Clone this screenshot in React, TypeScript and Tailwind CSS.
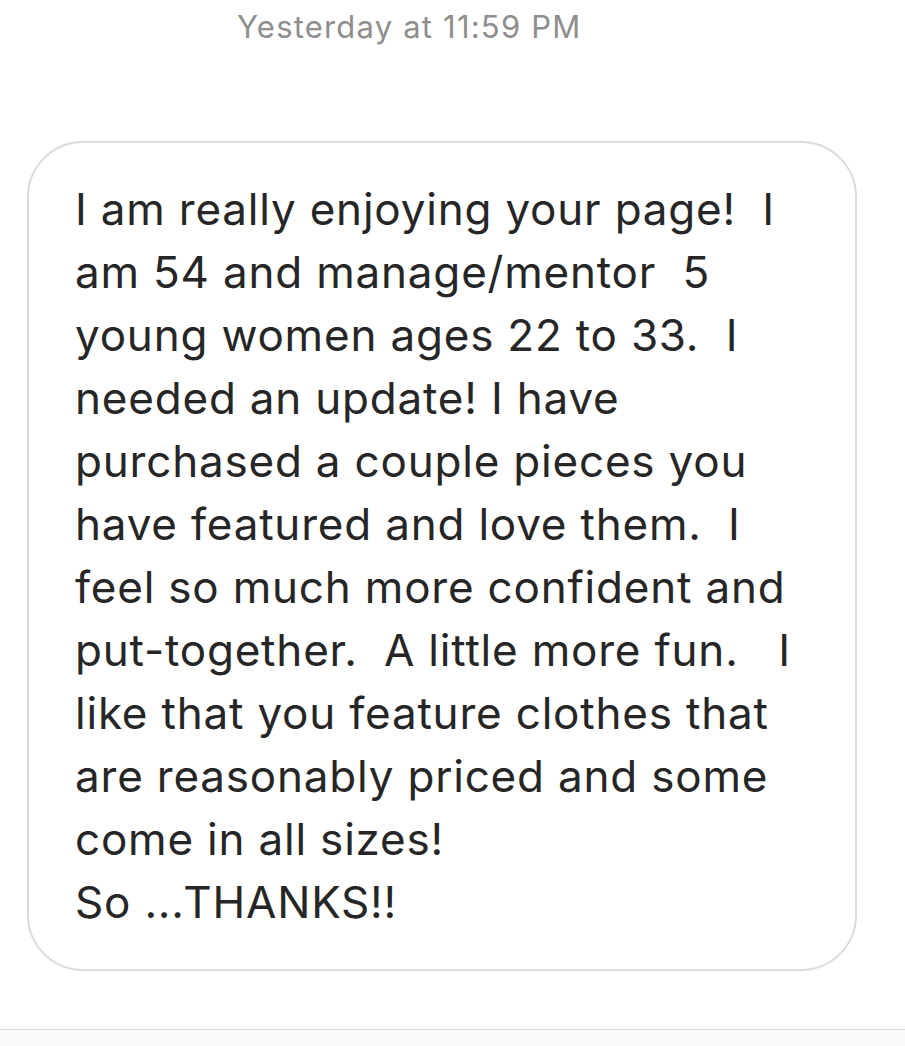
const lines = [
  "I am really enjoying your page!  I",
  "am 54 and manage/mentor  5",
  "young women ages 22 to 33.  I",
  "needed an update! I have",
  "purchased a couple pieces you",
  "have featured and love them.  I",
  "feel so much more confident and",
  "put-together.  A little more fun.   I",
  "like that you feature clothes that",
  "are reasonably priced and some",
  "come in all sizes!",
  "So ...THANKS!!",
];

export default function App() {
  return (
    <div className="flex h-[1046px] flex-col overflow-hidden bg-white font-['Inter','Liberation_Sans',sans-serif]">
      {/* Timestamp */}
      <div className="pt-[9px] pl-[237px] text-[31px] leading-[36px] tracking-[1.2px] text-[#8e8e8e]">
        Yesterday at 11:59 PM
      </div>

      {/* Message bubble */}
      <div className="mt-[96px] ml-[27px] w-[830px] rounded-[56px] border-2 border-[#dbdbdb] pt-[35px] pb-[35px] pl-[46px]">
        {lines.map((line, i) => (
          <div
            key={i}
            className="whitespace-pre text-[44px] leading-[63px] tracking-[0.8px] text-[#262626]"
          >
            {line}
          </div>
        ))}
      </div>

      {/* Composer area */}
      <div className="mt-[58px] flex-1 border-t border-[#dbdbdb] bg-[#fafafa]" />
    </div>
  );
}
